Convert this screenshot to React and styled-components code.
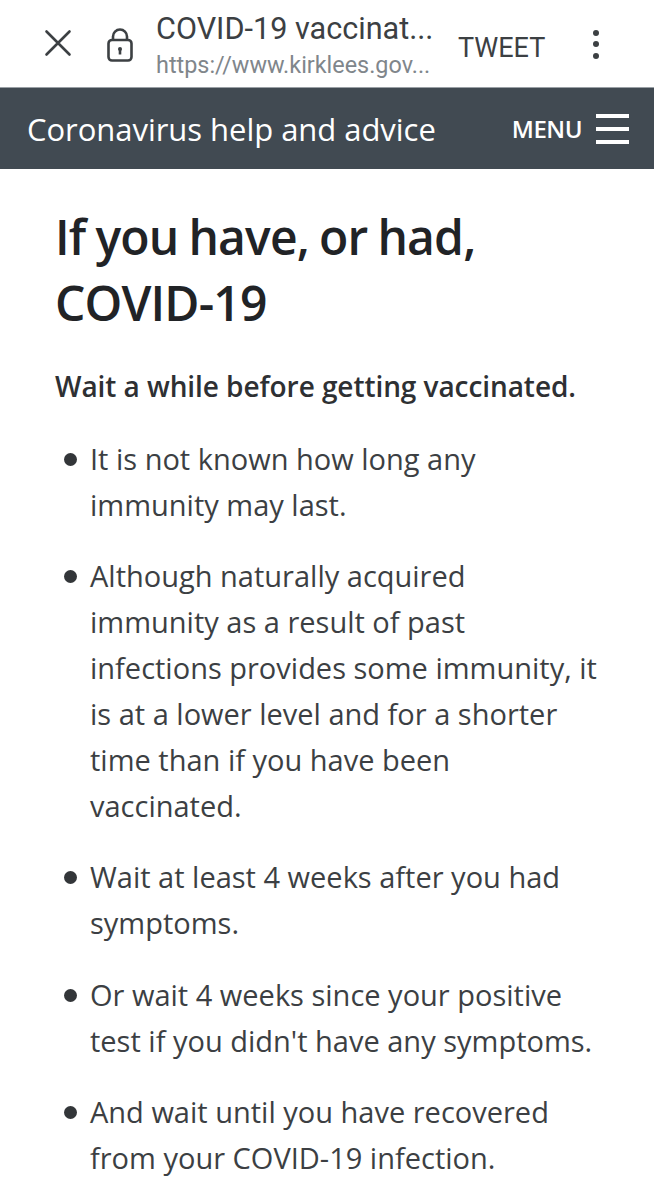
import styled, { createGlobalStyle } from "styled-components";

const GlobalStyle = createGlobalStyle`
  html, body {
    margin: 0;
    padding: 0;
    background: #fff;
  }
`;

const items = [
  ["It is not known how long any", "immunity may last."],
  [
    "Although naturally acquired",
    "immunity as a result of past",
    "infections provides some immunity, it",
    "is at a lower level and for a shorter",
    "time than if you have been",
    "vaccinated.",
  ],
  ["Wait at least 4 weeks after you had", "symptoms."],
  ["Or wait 4 weeks since your positive", "test if you didn't have any symptoms."],
  ["And wait until you have recovered", "from your COVID-19 infection."],
];

export default function App() {
  return (
    <Page>
      <GlobalStyle />
      <BrowserBar>
        <IconSlot>
          <svg width="30" height="30" viewBox="0 0 30 30" fill="none" stroke="#3c4043" strokeWidth="2.6" strokeLinecap="round">
            <path d="M3.5 3.5 L26.5 26.5 M26.5 3.5 L3.5 26.5" />
          </svg>
        </IconSlot>
        <LockSlot>
          <svg width="26" height="34" viewBox="0 0 26 34" fill="none" stroke="#3c4043" strokeWidth="2.6">
            <path d="M6 12 V8.5 a7 7 0 0 1 14 0 V12" />
            <rect x="1.5" y="12" width="23" height="20.5" rx="3.5" />
            <path d="M13 21 V26.5" strokeWidth="2.6" />
            <circle cx="13" cy="21" r="2" fill="#3c4043" stroke="none" />
          </svg>
        </LockSlot>
        <TitleBlock>
          <PageTitle>COVID-19 vaccinat...</PageTitle>
          <PageUrl>https://www.kirklees.gov...</PageUrl>
        </TitleBlock>
        <Tweet>TWEET</Tweet>
        <Dots>
          <Dot />
          <Dot />
          <Dot />
        </Dots>
      </BrowserBar>
      <SiteHeader>
        <SiteTitle>Coronavirus help and advice</SiteTitle>
        <MenuButton>
          <MenuLabel>MENU</MenuLabel>
          <Burger>
            <BurgerLine />
            <BurgerLine />
            <BurgerLine />
          </Burger>
        </MenuButton>
      </SiteHeader>
      <Content>
        <Heading>
          If you have, or had,
          <br />
          COVID-19
        </Heading>
        <Lead>Wait a while before getting vaccinated.</Lead>
        <List>
          {items.map((lines) => (
            <Item key={lines[0]}>
              {lines.map((line) => (
                <Line key={line}>{line}</Line>
              ))}
            </Item>
          ))}
        </List>
      </Content>
    </Page>
  );
}

const Page = styled.div`
  width: 654px;
  height: 1200px;
  overflow: hidden;
  background: #fff;
`;

const BrowserBar = styled.div`
  height: 87px;
  display: flex;
  align-items: center;
  font-family: Roboto, sans-serif;
`;

const IconSlot = styled.div`
  display: flex;
  margin-left: 43px;
  margin-top: -2px;
`;

const LockSlot = styled.div`
  display: flex;
  margin-left: 34px;
  margin-top: 2px;
`;

const TitleBlock = styled.div`
  margin-left: 23px;
  margin-top: 7px;
  width: 302px;
`;

const PageTitle = styled.div`
  font-size: 30.6px;
  line-height: 34px;
  color: #3c4043;
`;

const PageUrl = styled.div`
  font-size: 23.4px;
  line-height: 34px;
  margin-top: 2px;
  color: #80868b;
`;

const Tweet = styled.div`
  font-size: 27px;
  color: #3c4043;
  margin-top: 9px;
`;

const Dots = styled.div`
  display: flex;
  flex-direction: column;
  gap: 5.5px;
  margin-left: 48px;
  margin-top: 1px;
`;

const Dot = styled.span`
  width: 6px;
  height: 6px;
  border-radius: 50%;
  background: #3c4043;
`;

const SiteHeader = styled.div`
  height: 82px;
  box-sizing: border-box;
  padding: 0 25px 0 27px;
  background: #414a52;
  border-top: 1px solid #9aa0a5;
  display: flex;
  align-items: center;
  justify-content: space-between;
  color: #fff;
  font-family: "Open Sans", sans-serif;
`;

const SiteTitle = styled.div`
  font-size: 31px;
  letter-spacing: -0.04px;
`;

const MenuButton = styled.div`
  display: flex;
  align-items: center;
  gap: 14px;
`;

const MenuLabel = styled.span`
  font-size: 24px;
  font-weight: 600;
  letter-spacing: -0.5px;
`;

const Burger = styled.div`
  width: 33px;
  display: flex;
  flex-direction: column;
  gap: 9px;
`;

const BurgerLine = styled.span`
  height: 4px;
  background: #fff;
`;

const Content = styled.div`
  padding: 35px 0 0 55px;
  font-family: "Open Sans", sans-serif;
`;

const Heading = styled.h1`
  margin: 0;
  font-size: 48px;
  font-weight: 600;
  line-height: 66px;
  letter-spacing: -0.85px;
  word-spacing: -1.5px;
  color: #212326;
`;

const Lead = styled.p`
  margin: 30px 0 0;
  font-size: 28px;
  font-weight: 600;
  line-height: 40px;
  letter-spacing: -0.07px;
  color: #2e3033;
`;

const List = styled.ul`
  list-style: none;
  margin: 30px 0 0;
  padding: 0 0 0 35px;
`;

const Item = styled.li`
  position: relative;
  margin-bottom: 25.2px;
  &::before {
    content: "";
    position: absolute;
    left: -26px;
    top: 17px;
    width: 13px;
    height: 13px;
    border-radius: 50%;
    background: #333639;
  }
`;

const Line = styled.div`
  font-size: 29px;
  line-height: 46px;
  color: #3c3f43;
  white-space: nowrap;
`;
